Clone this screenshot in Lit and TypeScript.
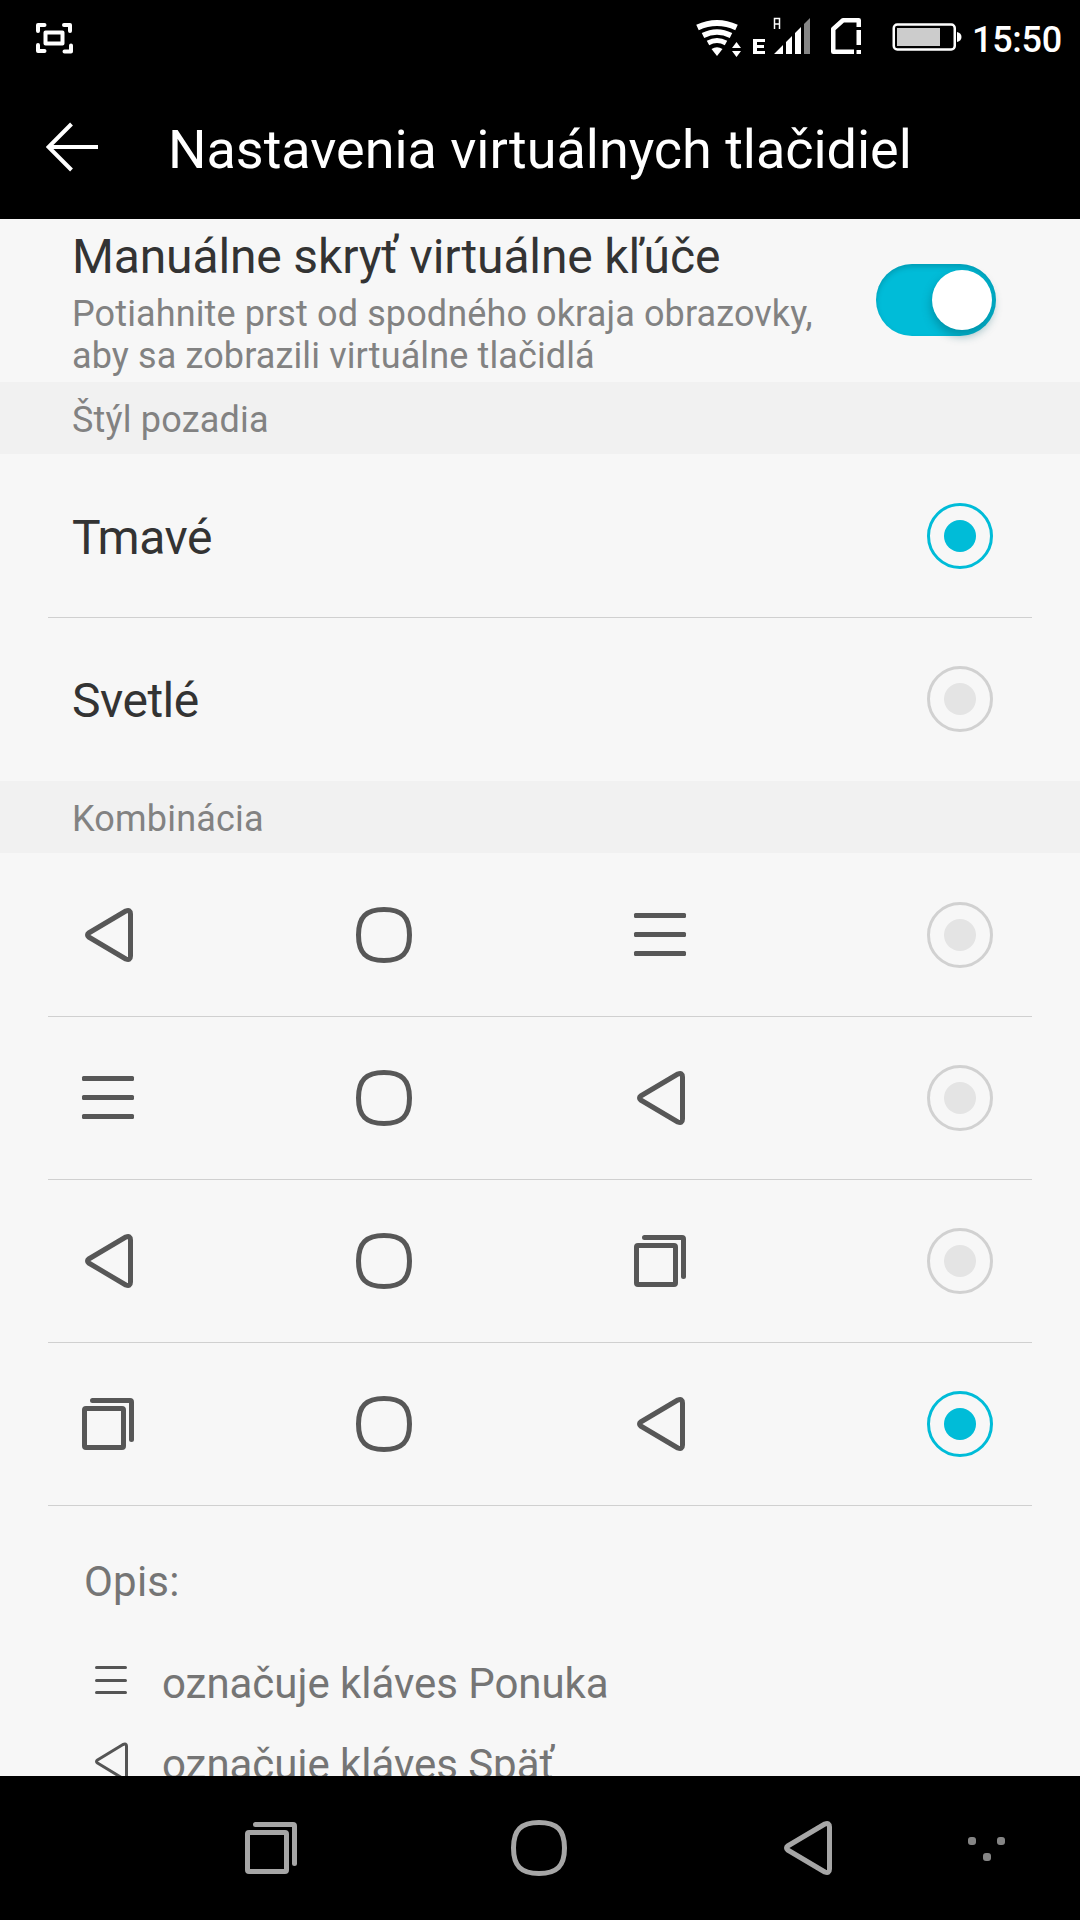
import { LitElement, html, svg, css } from "lit";
import { customElement, property } from "lit/decorators.js";

type Glyph = "back" | "home" | "menu" | "recent";

const shapes = {
  back: svg`<path d="M9.700 27 L46.800 5 Q51.500 3 51.500 8 V50 Q51.500 55 46.800 53 L9.700 31 Q7.300 29 9.700 27Z"/>`,
  home: svg`<path d="M29 3.500 C47 3.500 54.500 11 54.500 29 S47 54.500 29 54.500 S3.500 47 3.500 29 S11 3.500 29 3.500Z"/>`,
  menu: svg`<path d="M4.500 9.500H53.500M4.500 28.500H53.500M4.500 47.500H53.500" stroke-linecap="butt"/>`,
  recent: svg`<rect x="5.500" y="13.500" width="39" height="39" rx="1.500"/><path d="M13.500 5.500H51Q52.500 5.500 52.500 7V44.500"/>`,
};

@customElement("key-glyph")
class KeyGlyph extends LitElement {
  @property() kind: Glyph = "back";
  static styles = css`
    :host { display: block; width: 58px; height: 58px; }
    svg { display: block; width: 100%; height: 100%; overflow: visible; fill: none; stroke: currentColor; stroke-width: 5; stroke-linecap: round; stroke-linejoin: round; }
    .menu { fill: currentColor; stroke: none; }
  `;
  render() {
    if (this.kind === "menu") {
      return html`<svg class="menu" viewBox="0 0 58 58">
        ${[7, 26, 45].map((y) => svg`<rect x="3" y=${y} width="52" height="5" rx="1.5"/>`)}
      </svg>`;
    }
    return html`<svg viewBox="0 0 58 58">${shapes[this.kind]}</svg>`;
  }
}

@customElement("radio-mark")
class RadioMark extends LitElement {
  @property({ type: Boolean }) checked = false;
  static styles = css`
    :host { display: block; width: 66px; height: 66px; }
    svg { display: block; }
    .ring { fill: none; stroke: #d1d1d1; stroke-width: 3; }
    .dot { fill: #e4e4e4; }
    .on .ring { stroke: #00bcd8; }
    .on .dot { fill: #00bcd8; }
  `;
  render() {
    return html`<svg class=${this.checked ? "on" : "off"} width="66" height="66">
      <circle class="ring" cx="33" cy="33" r="31.500" /><circle class="dot" cx="33" cy="33" r="16" />
    </svg>`;
  }
}

@customElement("app-root")
class AppRoot extends LitElement {
  static styles = css`
    :host { display: block; font-family: Roboto, sans-serif; }
    .screen { width: 1080px; height: 1920px; display: flex; flex-direction: column; background: #f7f7f7; overflow: hidden; }
    svg { display: block; }
    .status { height: 76px; flex: none; background: #000; }
    .statusbar { display: flex; height: 76px; justify-content: space-between; color: #fff; }
    .right { display: flex; }
    .clock { font-size: 36px; font-weight: 500; line-height: 42px; padding-top: 19px; width: 108px; white-space: nowrap; letter-spacing: -0.3px; }
    .title { height: 143px; flex: none; background: #000; color: #fff; display: flex; align-items: center; padding-left: 46px; }
    .title svg { margin-bottom: 1px; }
    .title h1 { margin: 4px 0 0 70px; font-size: 54px; font-weight: 400; line-height: 64px; white-space: nowrap; letter-spacing: -0.03px; }
    .list { flex: 1; min-height: 0; overflow: hidden; }
    .manual { height: 163px; display: flex; justify-content: space-between; padding: 0 84px 0 72px; box-sizing: border-box; }
    .name { font-size: 48px; line-height: 56px; color: #333; white-space: nowrap; letter-spacing: -0.5px; padding-top: 4px; }
    .manual .name { margin-top: 10px; padding-top: 0; letter-spacing: -0.14px; }
    .hint { font-size: 36px; line-height: 42px; color: #828282; margin-top: 8px; white-space: nowrap; letter-spacing: 0.12px; }
    .switch { width: 120px; height: 72px; border-radius: 36px; background: #00bcd8; margin-top: 45px; box-shadow: inset 0 3px 5px rgba(0,80,95,.28); display: flex; justify-content: flex-end; align-items: center; padding-right: 4px; box-sizing: border-box; }
    .thumb { width: 60px; height: 60px; border-radius: 50%; background: #fff; box-shadow: 0 5px 10px 1px rgba(0,90,105,.42); }
    .section { height: 72px; background: #f1f1f1; color: #828282; font-size: 36px; line-height: 42px; padding: 17px 72px 0; box-sizing: border-box; letter-spacing: 0.2px; }
    .row { height: 163px; margin: 0 48px; padding: 0 39px 0 24px; border-bottom: 1px solid #d0d0d0; display: flex; align-items: center; justify-content: space-between; box-sizing: border-box; }
    .section + .row { margin-top: 1px; }
    .row.last { border-color: transparent; }
    .keys { display: flex; gap: 218px; padding-left: 7px; color: #575757; }
    .legend { padding: 51px 84px 0; font-size: 42px; line-height: 49px; color: #757575; }
    .heading { letter-spacing: 0.2px; }
    .entry { display: flex; align-items: center; height: 49px; white-space: nowrap; letter-spacing: -0.04px; }
    .entry.first { margin-top: 53px; }
    .entry.second { margin-top: 32px; }
    .entry svg { margin-left: 9px; width: 38px; height: 49px; fill: none; stroke: #555; stroke-width: 3; stroke-linecap: round; stroke-linejoin: round; }
    .entry span { margin-left: 31px; }
    .nav { height: 144px; flex: none; background: #000; color: #a6a6a6; display: flex; align-items: center; padding-left: 242px; }
    .nav .n2 { margin-left: 210px; }
    .nav .n3 { margin-left: 210px; }
    .nav .dots { margin-left: 132px; fill: #858585; }
  `;

  private row(glyphs: Glyph[], on: boolean) {
    return html`<div class="row">
      <div class="keys">${glyphs.map((g) => html`<key-glyph kind=${g}></key-glyph>`)}</div>
      <radio-mark ?checked=${on}></radio-mark>
    </div>`;
  }

  render() {
    return html`<main class="screen">
      <header class="status">
        <div class="statusbar">
          <svg width="120" height="76" fill="none" stroke="#fff" stroke-width="4" stroke-linecap="round" stroke-linejoin="round">
            <path d="M38 31V25H44.500M64 25H70V31M38 45V51H44.500M64.500 51.500H71V45.500" />
            <rect x="45.500" y="32.500" width="17" height="11" />
          </svg>
          <div class="right">
            <svg width="292" height="76" viewBox="-0 0 292 76" fill="#fff">
              <g fill="none" stroke="#fff" stroke-width="6">
                <path d="M17.500 27.500Q37 18.500 56.500 27.500" />
                <path d="M23 35.500Q37 28.500 51 35.500" stroke-width="5.500" />
                <path d="M28 43Q37 38 46 43" stroke-width="5" />
              </g>
              <path d="M31.500 49Q37 45.500 42.500 49L37 56Z" />
              <path d="M52 48L56.500 42L61 48ZM52 51H61L56.500 57Z" />
              <path d="M73 39H85V42H77V45H84V48H77V51H85V54H73Z" />
              <path d="M94.500 29V18.500H99.500V29M94.500 24H99.500" fill="none" stroke="#fff" stroke-width="1.500" />
              <path d="M94 54L103 45V54ZM106 42L112 36V54H106ZM115 33L121 27V54H115Z" />
              <path d="M124 24L130 18V54H124Z" fill="#858585" />
              <path d="M178.750 27V20.250H163L153.250 29V51.750H174" fill="none" stroke="#fff" stroke-width="4.500" stroke-linejoin="round" />
              <path d="M176.500 30H181V45H176.500ZM176.500 50H181V54H176.500Z" />
              <rect x="213.750" y="24.500" width="61" height="25" rx="3.500" fill="none" stroke="#fff" stroke-width="2.500" />
              <rect x="217" y="28" width="43" height="18" fill="#ccc" />
              <path d="M277 32Q281.500 33 281.500 37T277 42Z" />
            </svg>
            <div class="clock">15:50</div>
          </div>
        </div>
      </header>
      <div class="title">
        <svg width="52" height="50" fill="none" stroke="#fff" stroke-width="4"><path d="M52 25H3M25.500 2L2.500 25L25.500 48" /></svg>
        <h1>Nastavenia virtuálnych tlačidiel</h1>
      </div>
      <div class="list">
        <div class="manual">
          <div>
            <div class="name">Manuálne skryť virtuálne kľúče</div>
            <div class="hint">Potiahnite prst od spodného okraja obrazovky,<br />aby sa zobrazili virtuálne tlačidlá</div>
          </div>
          <div class="switch"><div class="thumb"></div></div>
        </div>
        <div class="section">Štýl pozadia</div>
        <div class="row"><div class="name">Tmavé</div><radio-mark checked></radio-mark></div>
        <div class="row last"><div class="name">Svetlé</div><radio-mark></radio-mark></div>
        <div class="section">Kombinácia</div>
        ${this.row(["back", "home", "menu"], false)}
        ${this.row(["menu", "home", "back"], false)}
        ${this.row(["back", "home", "recent"], false)}
        ${this.row(["recent", "home", "back"], true)}
        <div class="legend">
          <div class="heading">Opis:</div>
          <div class="entry first">
            <svg viewBox="0 0 38 49"><path d="M3.500 8.500H32.500M3.500 21.500H32.500M3.500 33.500H32.500" /></svg>
            <span>označuje kláves Ponuka</span>
          </div>
          <div class="entry second">
            <svg viewBox="0 0 38 49"><path d="M4.500 20L30 4.500Q33.500 3 33.500 6V37Q33.500 40 30 38.500L4.500 23Q2.500 21.500 4.500 20Z" /></svg>
            <span>označuje kláves Späť</span>
          </div>
        </div>
      </div>
      <nav class="nav">
        <key-glyph kind="recent"></key-glyph>
        <key-glyph class="n2" kind="home"></key-glyph>
        <key-glyph class="n3" kind="back"></key-glyph>
        <svg class="dots" width="50" height="58"><rect x="0" y="18" width="8" height="8" rx="3" /><rect x="29" y="18" width="8" height="8" rx="3" /><rect x="15" y="34" width="8" height="8" rx="3" /></svg>
      </nav>
    </main>`;
  }
}
